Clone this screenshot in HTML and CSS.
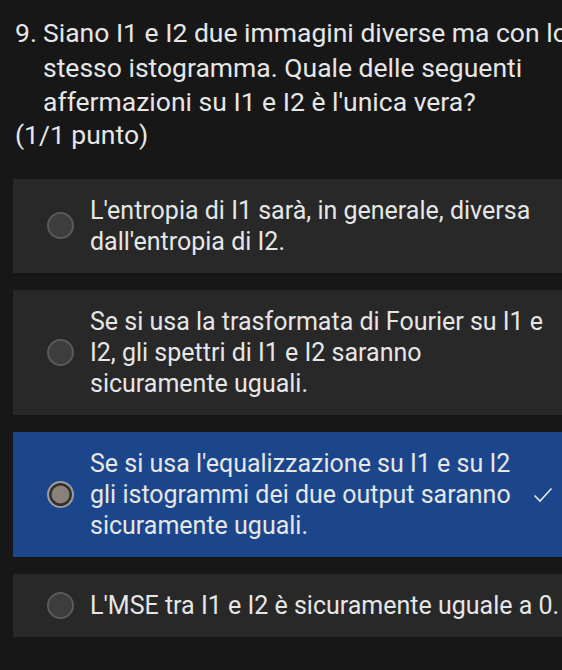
FILE: index.html
```html
<!DOCTYPE html>
<html lang="it">
<head>
<meta charset="utf-8">
<title>Domanda 9</title>
<link rel="stylesheet" href="styles.css">
</head>
<body>
<main class="quiz">
  <section class="question">
    <div class="q-head">
      <span class="q-num">9.</span>
      <span class="q-text">Siano I1 e I2 due immagini diverse ma con lo<br>stesso istogramma. Quale delle seguenti<br>affermazioni su I1 e I2 è l'unica vera?</span>
    </div>
    <div class="q-points">(1/1 punto)</div>
  </section>
  <ul class="options">
    <li class="option">
      <span class="radio"></span>
      <span class="opt-text">L'entropia di I1 sarà, in generale, diversa<br>dall'entropia di I2.</span>
    </li>
    <li class="option">
      <span class="radio"></span>
      <span class="opt-text">Se si usa la trasformata di Fourier su I1 e<br>I2, gli spettri di I1 e I2 saranno<br>sicuramente uguali.</span>
    </li>
    <li class="option option-selected">
      <span class="radio radio-selected"></span>
      <span class="opt-text">Se si usa l'equalizzazione su I1 e su I2<br>gli istogrammi dei due output saranno<br>sicuramente uguali.</span>
      <svg class="check" viewBox="0 0 20 16" width="20" height="16" aria-hidden="true"><path d="M1.5 8.5 L7 14 L18.5 1.5" fill="none" stroke="#e8e8e8" stroke-width="1.6"/></svg>
    </li>
    <li class="option">
      <span class="radio"></span>
      <span class="opt-text">L'MSE tra I1 e I2 è sicuramente uguale a 0.</span>
    </li>
  </ul>
</main>
</body>
</html>
```
FILE: styles.css
```css
html, body {
  margin: 0;
  padding: 0;
  background: #171717;
  overflow: hidden;
}
body {
  width: 562px;
  height: 670px;
  font-family: Roboto, "Noto Sans", sans-serif;
  color: #e6e6e6;
}
.quiz {
  padding-top: 16px;
}
.question {
  padding-left: 15px;
  font-size: 26.5px;
  line-height: 34.5px;
  white-space: nowrap;
}
.q-head {
  display: flex;
}
.q-num {
  width: 28px;
  flex: none;
}
.q-points {
  line-height: 30px;
}
.options {
  list-style: none;
  margin: 29px 0 0 13px;
  padding: 0;
  display: flex;
  flex-direction: column;
  gap: 17px;
}
.option {
  display: flex;
  align-items: center;
  gap: 16px;
  padding: 16px 9px 16px 34px;
  background: #282828;
  font-size: 25px;
  line-height: 31px;
}
.option-selected {
  background: #1b468b;
}
.opt-text {
  flex: 1;
  white-space: nowrap;
}
.radio {
  flex: none;
  width: 27px;
  height: 27px;
  box-sizing: border-box;
  border-radius: 50%;
  background: #3d3d3d;
  border: 2px solid #5a5a5a;
}
.radio-selected {
  background: #8a8178;
  border: 2px solid #9b9b9b;
  box-shadow: inset 0 0 0 2.5px #2f2f2f;
}
.check {
  flex: none;
  margin-top: 2px;
}
```
